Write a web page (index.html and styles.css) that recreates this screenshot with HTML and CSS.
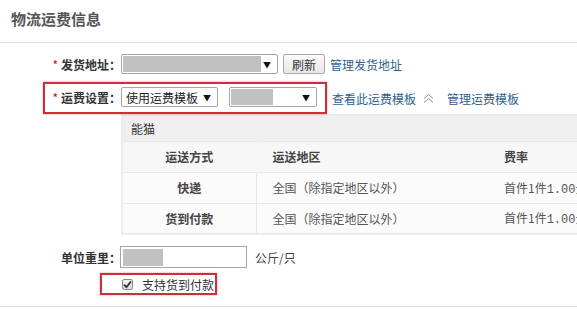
FILE: index.html
```html
<!DOCTYPE html>
<html lang="zh-CN">

<head>
    <meta charset="UTF-8" />
    <title>物流运费信息</title>
    <link rel="stylesheet" href="styles.css">
</head>

<body>
    <div class="panel">
        <h2 class="panel-title">物流运费信息</h2>

        <div class="form">
            <!-- Shipping address -->
            <div class="row">
                <label class="label"><em>*</em>发货地址：</label>
                <div class="select select-addr"><span class="blur blur-addr"></span><span class="arrow">▼</span></div>
                <button class="btn">刷新</button>
                <a class="link" href="#">管理发货地址</a>
            </div>

            <!-- Freight template (highlighted) -->
            <div class="row row-freight">
                <div class="mark mark-freight">
                    <label class="label label-freight"><em>*</em>运费设置：</label>
                    <div class="select select-mode">使用运费模板<span class="arrow">▼</span></div>
                    <div class="select select-tpl"><span class="blur blur-tpl"></span><span class="arrow">▼</span></div>
                </div>
                <a class="link" href="#">查看此运费模板</a>
                <svg class="fold" width="11" height="9" viewBox="0 0 11 9">
                    <polyline points="1,4.5 5.5,0.5 10,4.5" fill="none" stroke="#888" stroke-width="1" />
                    <polyline points="1,8.5 5.5,4.5 10,8.5" fill="none" stroke="#888" stroke-width="1" />
                </svg>
                <a class="link" href="#">管理运费模板</a>
            </div>

            <!-- Template detail -->
            <table class="rates">
                <colgroup>
                    <col class="col-way">
                    <col class="col-area">
                    <col class="col-fee">
                </colgroup>
                <tr class="rates-name">
                    <td colspan="3">能猫</td>
                </tr>
                <tr class="rates-head">
                    <th class="center">运送方式</th>
                    <th>运送地区</th>
                    <th>费率</th>
                </tr>
                <tr>
                    <th class="center">快递</th>
                    <td>全国（除指定地区以外）</td>
                    <td>首件1件<span class="num">1.00</span>元</td>
                </tr>
                <tr>
                    <th class="center">货到付款</th>
                    <td>全国（除指定地区以外）</td>
                    <td>首件1件<span class="num">1.00</span>元</td>
                </tr>
            </table>

            <!-- Unit weight -->
            <div class="row row-weight">
                <label class="label">单位重里：</label>
                <div class="input"><span class="blur blur-weight"></span></div>
                <span class="unit">公斤/只</span>
            </div>

            <!-- Cash on delivery (highlighted) -->
            <div class="row row-cod">
                <div class="mark mark-cod">
                    <span class="check">
                        <svg width="9" height="9" viewBox="0 0 9 9">
                            <path d="M1 4.6 L3.4 7.2 L8 1.4" fill="none" stroke="#333" stroke-width="1.8" />
                        </svg>
                    </span>
                    <span class="check-text">支持货到付款</span>
                </div>
            </div>
        </div>
    </div>
</body>

</html>
```

FILE: styles.css
```css
html,
body {
    margin: 0;
    padding: 0;
    overflow: hidden;
    background: #fff;
    font-family: 'Noto Sans CJK SC', 'DejaVu Sans', sans-serif;
    font-size: 12px;
    color: #333;
}

* {
    box-sizing: border-box;
}

/* Panel header */
.panel-title {
    margin: 0;
    height: 43px;
    padding-left: 11px;
    line-height: 38px;
    font-size: 15px;
    font-weight: bold;
    color: #555;
    border-bottom: 1px solid #e3e3e3;
}

.form {
    padding: 11px 0 11px;
    border-bottom: 1px solid #dcdcdc;
}

/* Rows */
.row {
    display: flex;
    align-items: center;
    height: 20px;
    white-space: nowrap;
}

.label {
    width: 121px;
    flex: none;
    text-align: right;
    font-weight: bold;
    color: #333;
}

.label em {
    font-style: normal;
    font-weight: normal;
    color: #c8102e;
    margin-right: 3px;
}

.link {
    color: #2f5f8f;
    text-decoration: none;
    margin-left: 5px;
}

/* Fake selects */
.select {
    position: relative;
    display: flex;
    align-items: center;
    height: 20px;
    border: 1px solid #a5a5a5;
    border-radius: 2px;
    background: #fff;
    padding-left: 4px;
    color: #222;
}

.select .arrow {
    margin-left: auto;
    padding-right: 6px;
    font-size: 8px;
    color: #111;
}

.select-addr {
    width: 157px;
    padding-left: 1px;
}

.select-mode {
    width: 97px;
}

.select-tpl {
    width: 88px;
    margin-left: 11px;
    padding-left: 1px;
}

.blur {
    display: block;
    background: #c1c1c1;
    height: 16px;
}

.blur-addr {
    width: 138px;
}

.blur-tpl {
    width: 42px;
}

.blur-weight {
    width: 40px;
    height: 17px;
}

.btn {
    margin-left: 5px;
    height: 20px;
    width: 42px;
    padding: 0;
    border: 1px solid #a8a8a8;
    border-radius: 2px;
    background: linear-gradient(#fbfbfb, #e6e6e6);
    font-family: inherit;
    font-size: 12px;
    color: #333;
}

/* Red highlight marks */
.mark {
    display: flex;
    align-items: center;
    border: 2px solid #c9303a;
    box-shadow: 0 0 2px rgba(201, 48, 58, 0.5);
}

.row-freight {
    height: 32px;
    margin-top: 8px;
}

.mark-freight {
    margin-left: 43px;
    height: 32px;
    padding: 2px 8px 4px 0;
}

.label-freight {
    width: 76px;
}

.fold {
    margin-left: 7px;
    margin-top: 1px;
}

.fold+.link {
    margin-left: 13px;
}

/* Template table */
.rates {
    margin-left: 121px;
    width: 540px;
    table-layout: fixed;
    border-collapse: collapse;
    border: 2px solid #ececec;
}

.col-way {
    width: 134px;
}

.col-area {
    width: 232px;
}

.rates td,
.rates th {
    padding: 0 0 0 16px;
    text-align: left;
    white-space: nowrap;
    overflow: hidden;
    border-top: 1px solid #e8e8e8;
    color: #555;
}

.rates th {
    font-weight: bold;
    color: #444;
}

.rates th.center {
    text-align: center;
    padding: 0;
}

.rates tr>*:first-child {
    border-right: 1px solid #e8e8e8;
}

.rates-name td {
    height: 26px;
    padding-left: 8px;
    background: #efefef;
    border-top: none;
    color: #333;
}

.rates-head th {
    height: 31px;
    background: #f7f7f7;
}

.rates-head th:first-child {
    border-right-color: #f7f7f7;
}

.rates tr:not(.rates-name):not(.rates-head)>* {
    height: 31px;
    background: #fbfbfb;
}

.num {
    font-family: 'Liberation Mono', monospace;
    font-size: 12px;
}

/* Weight */
.row-weight {
    height: 22px;
    margin-top: 11px;
}

.input {
    margin-left: -1px;
    width: 127px;
    height: 22px;
    border: 1px solid #a5a5a5;
    padding: 2px 0 0 2px;
}

.unit {
    margin-left: 8px;
    color: #444;
}

/* Cash on delivery */
.row-cod {
    height: 22px;
    margin-top: 5px;
}

.mark-cod {
    margin-left: 100px;
    height: 22px;
    padding-left: 20px;
    padding-right: 1px;
}

.check {
    display: flex;
    align-items: center;
    justify-content: center;
    width: 11px;
    height: 11px;
    border: 1px solid #8c8c8c;
    border-radius: 2px;
    background: linear-gradient(#f5f5f5, #d8d8d8);
}

.check-text {
    margin-left: 9px;
    color: #333;
}
```
